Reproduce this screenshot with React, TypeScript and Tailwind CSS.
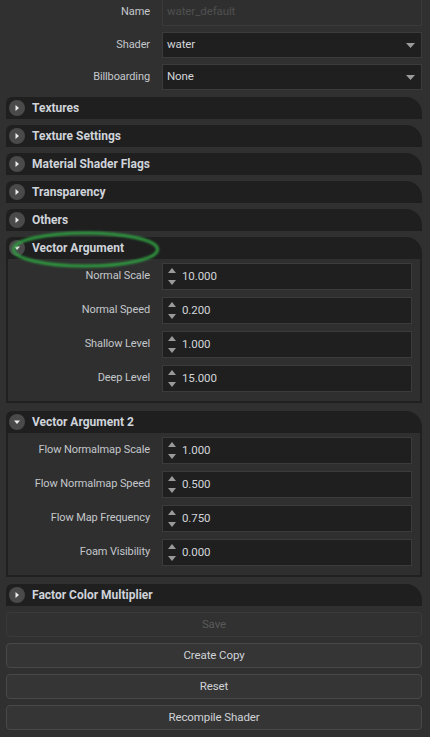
import React from "react";

const font = { fontFamily: "Roboto, 'Liberation Sans', sans-serif", letterSpacing: "-0.1px" };
const bold = { fontFamily: "Roboto, 'Liberation Sans', sans-serif" };

function Circle({ open }: { open?: boolean }) {
  return (
    <div className="w-[16px] h-[16px] rounded-full bg-[#4a4a4a] flex items-center justify-center shrink-0">
      <svg width="8" height="8" viewBox="0 0 8 8">
        {open ? <polygon points="1,2.5 7,2.5 4,6" fill="#ececec" /> : <polygon points="2.5,1 6,4 2.5,7" fill="#ececec" />}
      </svg>
    </div>
  );
}

function Header({ title, open }: { title: string; open?: boolean }) {
  return (
    <div className="h-[22px] rounded-tl-[6px] rounded-tr-[16px] bg-[#1f1f1f] flex items-center pl-[3px] gap-[7px]">
      <Circle open={open} />
      <span className="text-[12px] font-bold text-[#cfd3da] leading-none" style={bold}>{title}</span>
    </div>
  );
}

function Label({ children }: { children: React.ReactNode }) {
  return (
    <div className="w-[144px] text-right text-[11px] text-[#c4c7cc] shrink-0 whitespace-nowrap" style={font}>{children}</div>
  );
}

function NumRow({ label, value }: { label: string; value: string }) {
  return (
    <div className="flex items-center h-[27px]">
      <Label>{label}</Label>
      <div className="ml-[12px] w-[250px] h-[27px] bg-[#1f1f1f] border border-[#3b3b3b] flex items-center">
        <div className="w-[18px] flex flex-col items-center justify-center gap-[7px]">
          <svg width="8" height="5" viewBox="0 0 8 5"><polygon points="0,5 8,5 4,0" fill="#9a9a9a" /></svg>
          <svg width="8" height="5" viewBox="0 0 8 5"><polygon points="0,0 8,0 4,5" fill="#9a9a9a" /></svg>
        </div>
        <span className="ml-[1px] text-[11.5px] text-[#d2d5da]" style={font}>{value}</span>
      </div>
    </div>
  );
}

function SelectRow({ label, value }: { label: string; value: string }) {
  return (
    <div className="flex items-center h-[26px]">
      <Label>{label}</Label>
      <div className="ml-[12px] flex-1 h-[26px] bg-[#1f1f1f] border border-[#3b3b3b] flex items-center px-[4px]">
        <span className="flex-1 text-[11.5px] text-[#d2d5da]" style={font}>{value}</span>
        <svg width="9" height="5" viewBox="0 0 9 5" className="mr-[2px]"><polygon points="0,0 9,0 4.5,5" fill="#9a9a9a" /></svg>
      </div>
    </div>
  );
}

function Section({ title, rows }: { title: string; rows: [string, string][] }) {
  return (
    <div className="flex flex-col">
      <Header title={title} open />
      <div className="border-2 border-t-0 border-[#202020] bg-[#2f2f2f] pt-[4px] pb-[9px] flex flex-col gap-[7px]">
        {rows.map(([l, v]) => (
          <div key={l} className="-ml-[2px]"><NumRow label={l} value={v} /></div>
        ))}
      </div>
    </div>
  );
}

function Btn({ children, disabled }: { children: React.ReactNode; disabled?: boolean }) {
  return (
    <div
      className={
        "h-[25px] rounded-[4px] border flex items-center justify-center text-[11.5px] " +
        (disabled ? "border-[#3a3a3a] bg-[#313131] text-[#5a5a5a]" : "border-[#484848] bg-[#353535] text-[#d0d3d8]")
      }
      style={font}
    >
      {children}
    </div>
  );
}

export default function App() {
  return (
    <div className="w-[430px] h-[737px] bg-[#303030] overflow-hidden relative pl-[6px] pr-[8px]">
      <div className="flex flex-col gap-[6px] -mt-[2px]">
        <div className="flex flex-col gap-[6px]">
          <div className="flex items-center h-[28px]">
            <Label>Name</Label>
            <div className="ml-[12px] flex-1 h-[28px] bg-[#2f2f2f] border border-[#3a3a3a] flex items-center px-[4px]">
              <span className="text-[11.5px] text-[#4f4f4f]" style={font}>water_default</span>
            </div>
          </div>
          <SelectRow label="Shader" value="water" />
          <SelectRow label="Billboarding" value="None" />
        </div>
        <div className="flex flex-col gap-[6px] mt-[1px]">
          <Header title="Textures" />
          <Header title="Texture Settings" />
          <Header title="Material Shader Flags" />
          <Header title="Transparency" />
          <Header title="Others" />
          <Section
            title="Vector Argument"
            rows={[
              ["Normal Scale", "10.000"],
              ["Normal Speed", "0.200"],
              ["Shallow Level", "1.000"],
              ["Deep Level", "15.000"],
            ]}
          />
          <div className="mt-[2px]">
            <Section
              title="Vector Argument 2"
              rows={[
                ["Flow Normalmap Scale", "1.000"],
                ["Flow Normalmap Speed", "0.500"],
                ["Flow Map Frequency", "0.750"],
                ["Foam Visibility", "0.000"],
              ]}
            />
          </div>
          <div className="mt-[1px]">
            <Header title="Factor Color Multiplier" />
          </div>
          <div className="flex flex-col gap-[6px]">
            <Btn disabled>Save</Btn>
            <Btn>Create Copy</Btn>
            <Btn>Reset</Btn>
            <Btn>Recompile Shader</Btn>
          </div>
        </div>
      </div>
      <svg className="absolute left-0 top-0 pointer-events-none" width="430" height="737">
        <defs>
          <filter id="gl" x="-10%" y="-50%" width="120%" height="200%">
            <feGaussianBlur stdDeviation="0.8" />
          </filter>
        </defs>
        <ellipse cx="85.5" cy="249.5" rx="72" ry="16.5" fill="none" stroke="#2f9a40" strokeWidth="3" filter="url(#gl)" />
      </svg>
    </div>
  );
}
